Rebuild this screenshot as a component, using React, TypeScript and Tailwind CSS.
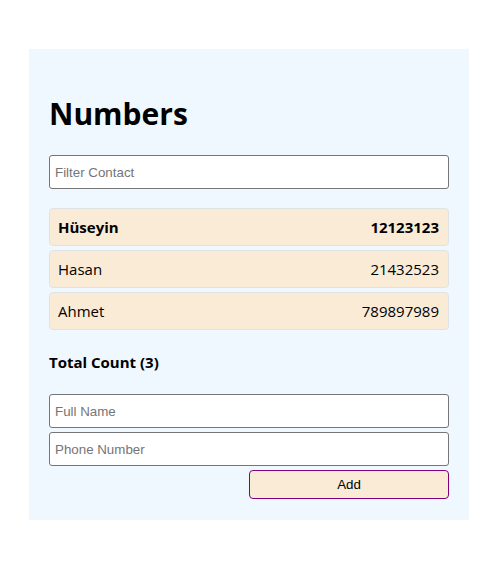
import React from "react";

const contacts = [
  { name: "Hüseyin", phone: "12123123", bold: true },
  { name: "Hasan", phone: "21432523", bold: false },
  { name: "Ahmet", phone: "789897989", bold: false },
];

const arial = { fontFamily: '"Liberation Sans", Arial, sans-serif' };

export default function App() {
  return (
    <div className="min-h-[573px] w-[501px] bg-white pt-[49px] pl-[29px]" style={{ fontFamily: '"Open Sans", "Noto Sans", sans-serif' }}>
      <div className="flex h-[471px] w-[440px] flex-col bg-[#f0f8ff] px-[20px]">
        <h1 className="mt-[37px] h-[56px] text-[30px] leading-[56px] font-bold text-black">Numbers</h1>
        <input
          className="mt-[13px] h-[34px] w-full rounded-[3px] border border-[#767676] bg-white px-[5px] text-[13.333px] placeholder:text-[#757575] outline-none"
          style={arial}
          placeholder="Filter Contact"
        />
        <ul className="mt-[19px] flex flex-col gap-[4px]">
          {contacts.map((c) => (
            <li
              key={c.name}
              className={`flex h-[38px] items-center justify-between rounded-[4px] border border-[#dfe3e6] bg-[#faebd7] pl-[8px] pr-[9px] text-[15px] text-black ${c.bold ? "font-bold" : ""}`}
            >
              <span>{c.name}</span>
              <span>{c.phone}</span>
            </li>
          ))}
        </ul>
        <div className="mt-[20px] h-[24px] text-[15px] leading-[24px] font-bold text-black">Total Count (3)</div>
        <div className="mt-[20px] flex flex-col gap-[4px]">
          <input
            className="h-[34px] w-full rounded-[3px] border border-[#767676] bg-white px-[5px] text-[13.333px] placeholder:text-[#757575] outline-none"
            style={arial}
            placeholder="Full Name"
          />
          <input
            className="h-[34px] w-full rounded-[3px] border border-[#767676] bg-white px-[5px] text-[13.333px] placeholder:text-[#757575] outline-none"
            style={arial}
            placeholder="Phone Number"
          />
          <div className="flex justify-end">
            <button
              className="h-[29px] w-[200px] rounded-[4px] border border-[#800080] bg-[#faebd7] text-[13.333px] text-black"
              style={arial}
            >
              Add
            </button>
          </div>
        </div>
      </div>
    </div>
  );
}
